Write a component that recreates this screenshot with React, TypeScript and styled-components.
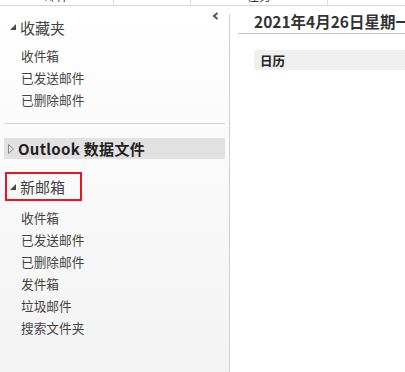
import React from "react";
import styled, { createGlobalStyle } from "styled-components";

const Global = createGlobalStyle`
  html, body { margin: 0; padding: 0; background: #ffffff; }
  body { font-family: "Noto Sans CJK SC", "Noto Sans", sans-serif; color: #444; }
  * { box-sizing: border-box; }
`;

const Page = styled.div`
  width: 405px;
  height: 372px;
  display: flex;
  flex-direction: column;
  overflow: hidden;
  background: #fff;
`;

const TopStrip = styled.div`
  height: 6px;
  flex: none;
  display: flex;
  border-bottom: 1px solid #d6d6d6;
  overflow: hidden;
`;

const TopTab = styled.div<{ $w: number }>`
  width: ${(p) => p.$w}px;
  height: 5px;
  border-right: 1px solid #dcdcdc;
  display: flex;
  justify-content: center;
  align-items: flex-end;
  font-size: 12px;
  line-height: 12px;
  color: #333;
  overflow: hidden;
`;

const TopTabText = styled.span`
  margin-bottom: 3px;
`;

const Main = styled.div`
  flex: 1;
  display: flex;
  min-height: 0;
`;

const LeftPane = styled.div`
  width: 229px;
  flex: none;
  background: linear-gradient(#ffffff, #f3f3f3);
  padding: 9px 4px 0 4px;
  display: flex;
  flex-direction: column;
`;

const GroupHeader = styled.div`
  height: 24px;
  display: flex;
  align-items: center;
  padding-left: 6px;
  font-size: 15px;
  color: #444;
`;

const HeaderTitle = styled.span`
  flex: 1;
  display: flex;
  align-items: center;
  gap: 4px;
`;

const Collapse = styled.span`
  align-self: flex-start;
  margin-top: -3px;
  margin-right: 6px;
  display: flex;
`;

const Items = styled.div<{ $top: number }>`
  display: flex;
  flex-direction: column;
  margin-top: ${(p) => p.$top}px;
`;

const Item = styled.div`
  height: 22px;
  display: flex;
  align-items: center;
  padding-left: 17px;
  font-size: 12.7px;
  color: #444;
`;

const Separator = styled.div`
  height: 1px;
  background: #d4d4d4;
  margin: 13px 0 0 0;
`;

const StoreRow = styled.div`
  margin-top: 14px;
  height: 21px;
  background: #e1e1e1;
  display: flex;
  align-items: center;
  gap: 4px;
  padding-left: 4px;
  font-size: 15px;
  font-weight: bold;
  color: #222;
`;

const StoreText = styled.span`
  letter-spacing: 0.3px;
`;

const MailboxBox = styled.div`
  margin-top: 13px;
  margin-left: 1px;
  width: 77px;
  height: 29px;
  border: 2px solid #e8141f;
  display: flex;
  align-items: center;
  gap: 4px;
  padding-left: 3px;
  font-size: 15px;
  color: #444;
`;

const RightPane = styled.div`
  flex: 1;
  position: relative;
  display: flex;
  flex-direction: column;
  padding-left: 9px;
  &::before {
    content: "";
    position: absolute;
    left: 0;
    top: 8px;
    bottom: 0;
    width: 1px;
    background: #d0d0d0;
  }
`;

const DateHeading = styled.div`
  height: 28px;
  border-bottom: 1px solid #c4c4c4;
  padding: 2px 0 0 16px;
  display: flex;
  align-items: center;
  font-size: 15.5px;
  font-weight: bold;
  color: #333;
  white-space: nowrap;
  overflow: hidden;
`;

const CalendarBar = styled.div`
  margin: 16px 0 0 16px;
  height: 20px;
  background: #efefef;
  display: flex;
  align-items: center;
  padding-left: 6px;
  font-size: 12.5px;
  font-weight: bold;
  color: #222;
`;

const FilledTri = () => (
  <svg width="6" height="6" viewBox="0 0 6 6">
    <polygon points="6,0 6,6 0,6" fill="#4a4a4a" />
  </svg>
);

const OpenTri = () => (
  <svg width="6" height="10" viewBox="0 0 6 10">
    <polygon points="0.5,0.5 5.5,5 0.5,9.5" fill="none" stroke="#8a8a8a" strokeWidth="1" />
  </svg>
);

const Chevron = () => (
  <svg width="7" height="8" viewBox="0 0 7 8">
    <polyline points="5.5,1 2,4 5.5,7" fill="none" stroke="#555" strokeWidth="2" />
  </svg>
);

const favorites = ["收件箱", "已发送邮件", "已删除邮件"];
const mailbox = ["收件箱", "已发送邮件", "已删除邮件", "发件箱", "垃圾邮件", "搜索文件夹"];

export default function App() {
  return (
    <Page>
      <Global />
      <TopStrip>
        <TopTab $w={114}>
          <TopTabText>邮件</TopTabText>
        </TopTab>
        <TopTab $w={77} />
        <TopTab $w={137}>
          <TopTabText>任务</TopTabText>
        </TopTab>
      </TopStrip>
      <Main>
        <LeftPane>
          <GroupHeader>
            <HeaderTitle>
              <FilledTri />
              收藏夹
            </HeaderTitle>
            <Collapse>
              <Chevron />
            </Collapse>
          </GroupHeader>
          <Items $top={5}>
            {favorites.map((f) => (
              <Item key={f}>{f}</Item>
            ))}
          </Items>
          <Separator />
          <StoreRow>
            <OpenTri />
            <StoreText>Outlook 数据文件</StoreText>
          </StoreRow>
          <MailboxBox>
            <FilledTri />
            新邮箱
          </MailboxBox>
          <Items $top={5}>
            {mailbox.map((f) => (
              <Item key={f}>{f}</Item>
            ))}
          </Items>
        </LeftPane>
        <RightPane>
          <DateHeading>2021年4月26日星期一</DateHeading>
          <CalendarBar>日历</CalendarBar>
        </RightPane>
      </Main>
    </Page>
  );
}
